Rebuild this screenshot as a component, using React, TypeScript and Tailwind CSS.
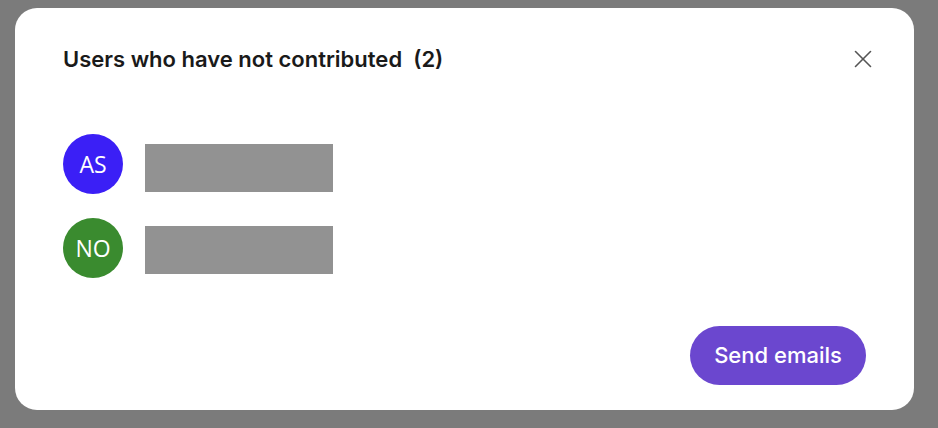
import { X } from "lucide-react";

const users = [
  { initials: "AS", color: "bg-[#3b1ff6]", barOffset: "mt-[10px]" },
  { initials: "NO", color: "bg-[#3a8b2f]", barOffset: "mt-[8px]" },
];

export default function App() {
  return (
    <div className="w-[938px] h-[428px] bg-[#7b7b7b] pt-[8px] pl-[15px] overflow-hidden">
      <div className="w-[899px] h-[402px] bg-white rounded-[22px] flex flex-col px-[48px] pt-[36px]">
        {/* Header */}
        <div className="flex items-center justify-between h-[30px]">
          <h2 className="text-[22px] font-semibold text-[#1a1a1a] font-['Inter',sans-serif]">
            Users who have not contributed&nbsp; (2)
          </h2>
          <button className="text-[#555] mr-[-12px]">
            <X className="w-[30px] h-[30px]" strokeWidth={1.3} />
          </button>
        </div>

        {/* List */}
        <div className="flex flex-col gap-[24px] mt-[60px]">
          {users.map((u) => (
            <div key={u.initials} className="flex items-start gap-[22px]">
              <div
                className={`w-[60px] h-[60px] rounded-full ${u.color} flex items-center justify-center text-white text-[23px] font-['Open_Sans',sans-serif]`}
              >
                {u.initials}
              </div>
              <div className={`w-[188px] h-[48px] bg-[#929292] ${u.barOffset}`} />
            </div>
          ))}
        </div>

        {/* Footer */}
        <div className="flex justify-end mt-[48px]">
          <button className="w-[176px] h-[59px] rounded-full bg-[#6b47cf] text-white text-[22px] font-medium font-['Inter',sans-serif]">
            Send emails
          </button>
        </div>
      </div>
    </div>
  );
}
